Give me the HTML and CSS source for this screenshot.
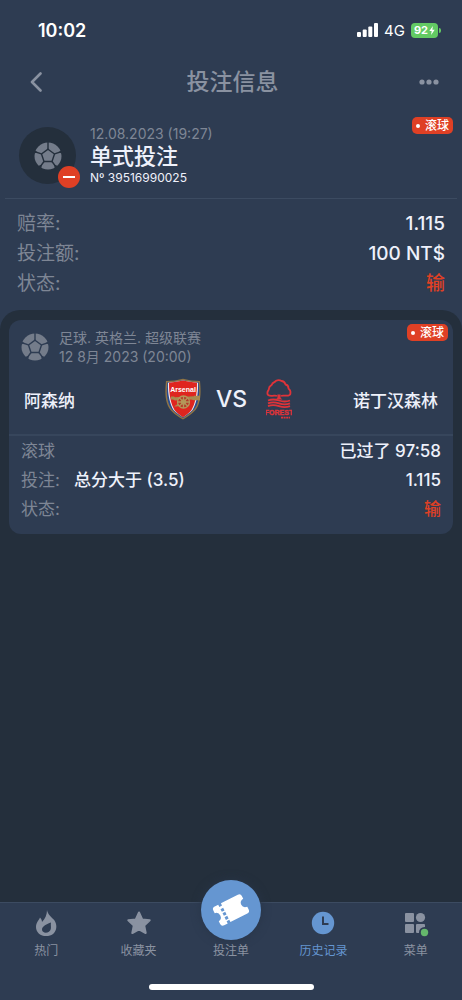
FILE: index.html
```html
<!DOCTYPE html>
<html lang="zh-CN">

<head>
    <meta charset="UTF-8">
    <meta name="viewport" content="width=device-width, initial-scale=1.0">
    <title>投注信息</title>
    <link rel="stylesheet" href="styles.css">
</head>

<body>
    <!-- shared football icon -->
    <svg class="sprite" aria-hidden="true">
        <symbol id="icon-ball" viewBox="0 0 28 28">
            <circle cx="14" cy="14" r="13.5" fill="currentColor" />
            <g class="seam">
                <path d="M14 7.2 20.5 11.900 18 19.500H10L7.500 11.900Z" />
                <path d="M14 7.200V0M20.500 11.900 28 9.500M18 19.500 22.500 25.700M10 19.500 5.500 25.700M7.500 11.900 0 9.500" />
                <path d="M26 10 28 8.500V11ZM2 10 0 8.500V11ZM21 23.700 23.500 24.500 21.500 26.500ZM7 23.700 4.500 24.500 6.500 26.500Z" />
            </g>
        </symbol>
    </svg>

    <div class="status-bar">
        <span class="time">10:02</span>
        <div class="status-right">
            <svg class="signal" viewBox="0 0 21 14" aria-hidden="true">
                <rect x="0" y="9" width="4" height="5" rx="1" />
                <rect x="5.700" y="6.500" width="4" height="7.500" rx="1" />
                <rect x="11.300" y="3.500" width="4" height="10.500" rx="1" />
                <rect x="17" y="0" width="4" height="14" rx="1" />
            </svg>
            <span class="network">4G</span>
            <span class="battery">92<svg viewBox="0 0 6 10" aria-hidden="true"><path d="M4 0 0 5.600H2.600L2 10 6 4.300H3.400Z" /></svg></span>
        </div>
    </div>

    <header class="header">
        <button class="icon-btn" aria-label="返回">
            <svg width="12" height="20" viewBox="0 0 12 20"><path class="back-line" d="M10.500 1.500 2 10 10.500 18.500" /></svg>
        </button>
        <h1>投注信息</h1>
        <button class="icon-btn" aria-label="更多">
            <svg width="20" height="6" viewBox="0 0 20 6" fill="currentColor">
                <circle cx="3" cy="3" r="2.600" />
                <circle cx="10" cy="3" r="2.600" />
                <circle cx="17" cy="3" r="2.600" />
            </svg>
        </button>
    </header>

    <section class="summary">
        <span class="live">滚球</span>
        <div class="bet-head">
            <div class="bet-icon">
                <svg class="ball"><use href="#icon-ball" /></svg>
                <span class="minus"></span>
            </div>
            <div class="bet-text">
                <p class="bet-date">12.08.2023 (19:27)</p>
                <h2>单式投注</h2>
                <p class="bet-number">Nº 39516990025</p>
            </div>
        </div>
        <dl class="rows">
            <div><dt>赔率:</dt><dd>1.115</dd></div>
            <div><dt>投注额:</dt><dd>100 NT$</dd></div>
            <div><dt>状态:</dt><dd class="lost">输</dd></div>
        </dl>
    </section>

    <main class="content">
        <article class="card">
            <span class="live">滚球</span>
            <div class="league">
                <svg class="ball"><use href="#icon-ball" /></svg>
                <div>
                    <p>足球. 英格兰. 超级联赛</p>
                    <p>12 8月 2023 (20:00)</p>
                </div>
            </div>
            <div class="teams">
                <span class="team">阿森纳</span>
                <svg class="arsenal" viewBox="0 0 36 42" role="img" aria-label="Arsenal">
                    <path d="M1 3Q10 3 18 .8 26 3 35 3C36 13 36 21 33 28 30 34 24 38 18 41.500 12 38 6 34 3 28 0 21 0 13 1 3Z" fill="#8f7445" />
                    <path d="M2.300 4.300Q11 4 18 2.200 25 4 33.700 4.300C34.600 14 34.300 21 31.700 27.300 29 33 23.500 36.500 18 40 12.500 36.500 7 33 4.300 27.300 1.700 21 1.400 14 2.300 4.300Z" fill="#294b91" />
                    <path d="M3 4.700Q11 4.200 18 2.600 25 4.200 33 4.700C33.500 17 31 26 27.500 32 24.500 35 21 37.500 18 39.300 15 37.500 11.500 35 8.500 32 5 26 2.500 17 3 4.700Z" fill="#eee9ed" />
                    <path d="M4 4.800Q12 4 18 2.600 24 4 32 4.800C32 17 30 26 26.500 32 24 35 21 37.500 18 39.300 15 37.500 12 35 9.500 32 6 26 4 17 4 4.800Z" fill="#df251f" />
                    <text x="18" y="13.500" text-anchor="middle">Arsenal</text>
                    <path d="M6 18.500H9L10 19.300 29 18.300V17.800H35V22.300H29L26 21.500 10 22.500 8 21.500H6Z" fill="#a78a4f" />
                    <path d="M9 28.500 17 23 20 24.500 12 28.500Z" fill="#a78a4f" />
                    <g fill="none" stroke="#b49659" stroke-width="1.300">
                        <circle cx="18.500" cy="24" r="6" fill="#b33a29" />
                        <path d="M12.500 24H24.500M18.500 18V30M14.300 19.800 22.700 28.200M22.700 19.800 14.300 28.200" />
                        <circle cx="18.500" cy="24" r="2" fill="#b49659" />
                    </g>
                </svg>
                <span class="versus">VS</span>
                <svg class="forest" viewBox="0 0 26 40" role="img" aria-label="Forest">
                    <g fill="none" stroke="#df3339" stroke-width="1.800" stroke-linejoin="round">
                        <path d="M11 17C9 16 8 17 6 16.800 3 17 1 16 1.500 14 1 12 3 11.500 3 9.500 3 7 5 7 6 5.500 6 3.500 9 3.500 10 1.800 12 .8 14 1 15.500 2 18 2 19 4 19.500 5.500 22 6 22.500 8 22.500 9.500 24 11 25 12.500 24.300 14 25 16 22 17 20 16.500 18 17 17 16 15 17" />
                        <path d="M2 21.500Q7 19.500 13 21.500T24 21.500M2 24.300Q7 22.300 13 24.300T24 24.300M2 27.100Q7 25.100 13 27.100T24 27.100" />
                    </g>
                    <path d="M11.400 15.500H14.600V19L16.500 20.500H9.500L11.400 19Z" fill="#df3339" />
                    <text x="13" y="36" text-anchor="middle">FOREST</text>
                    <path d="M15 38.600H24" stroke="#df3339" stroke-width="1.700" stroke-dasharray="2 .6" />
                </svg>
                <span class="team away">诺丁汉森林</span>
            </div>
            <dl class="rows small">
                <div><dt>滚球</dt><dd>已过了 97:58</dd></div>
                <div><dt>投注:</dt><dd class="pick">总分大于 (3.5)</dd><dd>1.115</dd></div>
                <div><dt>状态:</dt><dd class="lost">输</dd></div>
            </dl>
        </article>
    </main>

    <nav class="tabs">
        <a href="#hot">
            <svg viewBox="0 0 28 28"><path d="M15 1C15.500 5.500 20 8.500 22.500 11.500 26 16.500 24.500 25 18 26.500 11 28.500 4 25 4 18 4 13.500 7 11 8 8.500 9.500 10 10 11.500 10 13 13 10 15 6 15 1Z" fill="currentColor" /><path class="cut" d="M19 13.500C15 15 10 17 10 20.500 10 25 18 24.500 18.800 20 19.300 17.500 18.500 16 19 13.500Z" /></svg>
            <span>热门</span>
        </a>
        <a href="#favorites">
            <svg viewBox="0 0 28 28"><path d="m14 3.500 3.200 6.900 7.500.9-5.500 5.200 1.500 7.500L14 20.300 7.300 24l1.500-7.500-5.500-5.200 7.500-.9Z" fill="currentColor" stroke="currentColor" stroke-width="2" stroke-linejoin="round" /></svg>
            <span>收藏夹</span>
        </a>
        <a href="#slip" class="slip">
            <i class="slip-circle">
                <svg viewBox="0 0 60 60"><g transform="rotate(-27 30 30)"><path d="M16 19.500H21V22H24V19.500H43Q46 19.500 46 22.500V25.500Q41.500 26 41.500 30T46 34.500V37.500Q46 40.500 43 40.500H24V38H21V40.500H17Q14 40.500 14 37.500V34.500Q18 34 18 30T14 25.500V22.500Q14 19.500 17 19.500Z" fill="#fff" /><path d="M22.500 24.500V27.500M22.500 29V32M22.500 33.500V36.500" stroke="#6596d1" stroke-width="3" /></g></svg>
            </i>
            <span>投注单</span>
        </a>
        <a href="#history" class="active">
            <svg viewBox="0 0 28 28"><circle cx="14" cy="14" r="11.200" fill="currentColor" /><path class="clock-hand" d="M14 7.500V15H19.500" /></svg>
            <span>历史记录</span>
        </a>
        <a href="#menu">
            <svg viewBox="0 0 28 28"><g fill="currentColor"><rect x="3" y="4" width="9" height="9" rx="1" /><circle cx="18.500" cy="8.500" r="4.600" /><rect x="3" y="15" width="9" height="9" rx="1" /><rect x="14" y="15" width="9" height="9" rx="1" /></g><circle class="cut" cx="22.500" cy="23.500" r="5.500" /><circle cx="22.500" cy="23.500" r="3.700" fill="#65b76c" /></svg>
            <span>菜单</span>
        </a>
    </nav>
</body>

</html>
```
FILE: styles.css
```css
* {
    box-sizing: border-box;
    padding: 0;
    margin: 0;
}

body {
    display: flex;
    flex-direction: column;
    min-height: 100vh;
    background-color: #2e3c52;
    color: #eef1fb;
    font-family: Inter, "Noto Sans CJK SC", sans-serif;
}

.sprite {
    position: absolute;
    width: 0;
    height: 0;
}

.seam {
    fill: none;
    stroke: var(--seam, #2e3c52);
    stroke-width: 1.4;
}

/* status bar */
.status-bar {
    display: flex;
    justify-content: space-between;
    align-items: center;
    height: 60px;
    padding: 0 22px 0 38px;
    color: #fff;
}

.time {
    font-size: 18px;
    font-weight: 600;
}

.status-right {
    display: flex;
    align-items: center;
    gap: 6px;
}

.signal {
    width: 21px;
    height: 14px;
    fill: #fff;
}

.network {
    font-size: 15px;
}

.battery {
    position: relative;
    display: flex;
    align-items: center;
    justify-content: center;
    gap: 1px;
    width: 27px;
    height: 15px;
    margin-right: 2px;
    border-radius: 4px;
    background-color: #63ca63;
    font-size: 11px;
    font-weight: 700;
}

.battery svg {
    width: 6px;
    height: 9px;
    fill: #fff;
}

.battery::after {
    content: "";
    position: absolute;
    right: -3px;
    top: 5px;
    width: 2px;
    height: 5px;
    border-radius: 0 2px 2px 0;
    background-color: #63ca63;
}

/* header */
.header {
    display: flex;
    justify-content: space-between;
    align-items: center;
    height: 44px;
    padding: 0 13px 0 16px;
    color: #8a92a1;
}

.header h1 {
    font-size: 23px;
    line-height: 44px;
    font-weight: 500;
}

.icon-btn {
    display: flex;
    align-items: center;
    justify-content: center;
    width: 40px;
    height: 40px;
    border: none;
    background: none;
    color: inherit;
}

.back-line {
    fill: none;
    stroke: currentColor;
    stroke-width: 2.6;
    stroke-linecap: round;
    stroke-linejoin: round;
}

/* live badge */
.live {
    position: absolute;
    top: 13px;
    right: 9px;
    display: flex;
    align-items: center;
    gap: 5px;
    height: 17px;
    padding: 0 4px;
    border-radius: 5px;
    background-color: #df4025;
    color: #fff;
    font-size: 12px;
    font-weight: 500;
    line-height: 17px;
}

.live::before {
    content: "";
    width: 4px;
    height: 4px;
    border-radius: 50%;
    background-color: #fff;
}

/* bet summary */
.summary {
    position: relative;
    padding: 0 5px 11px;
}

.bet-head {
    display: flex;
    gap: 14px;
    padding: 20px 14px 10px;
    border-bottom: 1px solid #3c4b61;
}

.bet-icon {
    --seam: #242f3c;
    position: relative;
    display: flex;
    align-items: center;
    justify-content: center;
    width: 57px;
    height: 57px;
    margin-top: 3px;
    border-radius: 50%;
    background-color: #242f3c;
}

.ball {
    width: 28px;
    height: 28px;
    color: #747c8a;
}

.minus {
    position: absolute;
    right: -4px;
    bottom: -4px;
    display: flex;
    align-items: center;
    justify-content: center;
    width: 22px;
    height: 22px;
    border-radius: 50%;
    background-color: #df4025;
}

.minus::before {
    content: "";
    width: 12px;
    height: 2px;
    background-color: #fff;
}

.bet-date {
    color: #7e8695;
    font-size: 14px;
    line-height: 20px;
}

.bet-text h2 {
    font-size: 22px;
    line-height: 24px;
    font-weight: 500;
}

.bet-number {
    font-size: 12px;
    line-height: 20px;
}

.rows {
    padding: 10px 12px 0;
    font-size: 19px;
    line-height: 30px;
}

.rows div {
    display: flex;
    justify-content: space-between;
}

.rows dt {
    color: #7e8695;
}

.rows dd {
    font-weight: 500;
}

.rows .lost {
    color: #df4025;
}

/* match list */
.content {
    flex: 1;
    padding: 10px 9px;
    border-radius: 20px 20px 0 0;
    background-color: #242f3c;
}

.card {
    position: relative;
    padding-bottom: 10px;
    border-radius: 12px;
    background-color: #2e3c52;
}

.card .live {
    top: 4px;
    right: 5px;
}

.league {
    display: flex;
    align-items: center;
    gap: 10px;
    padding: 8px 12px 0;
    color: #7e8695;
    font-size: 14px;
    line-height: 19px;
}

.teams {
    display: grid;
    grid-template-columns: 1fr 36px 30px 36px 1fr;
    align-items: center;
    column-gap: 15px;
    height: 70px;
    padding: 0 15px 2px;
    border-bottom: 2px solid #37465c;
    font-size: 17px;
    font-weight: 500;
}

.away {
    text-align: right;
    white-space: nowrap;
}

.versus {
    font-size: 23px;
    text-align: center;
}

.arsenal {
    width: 36px;
    height: 42px;
}

.arsenal text {
    fill: #fff;
    font: bold 7px "Liberation Sans", sans-serif;
}

.forest {
    width: 26px;
    height: 40px;
    margin: 0 auto;
}

.forest text {
    fill: #df3339;
    stroke: #df3339;
    stroke-width: 0.4;
    font: bold 8px "Liberation Sans Narrow", "Liberation Sans", sans-serif;
    font-size: 7px;
}

.rows.small {
    padding: 1px 12px 0;
    font-size: 17px;
    line-height: 29px;
}

.rows .pick {
    flex: 1;
    padding-left: 14px;
}

/* bottom tabs */
.tabs {
    position: relative;
    display: grid;
    grid-template-columns: repeat(5, 1fr);
    height: 98px;
    border-top: 1px solid #3c4b61;
}

.tabs a {
    display: flex;
    flex-direction: column;
    align-items: center;
    padding-top: 6px;
    color: #8a92a1;
    font-size: 12px;
    line-height: 28px;
    text-decoration: none;
}

.tabs a > svg {
    width: 28px;
    height: 28px;
}

.tabs .active {
    color: #6596d1;
}

.cut {
    fill: #2e3c52;
}

.clock-hand {
    fill: none;
    stroke: #2e3c52;
    stroke-width: 2;
}

.slip-circle {
    width: 60px;
    height: 60px;
    margin-top: -29px;
    margin-bottom: -3px;
    border-radius: 50%;
    background-color: #6596d1;
    box-shadow: 0 0 10px #283548;
}

/* home indicator */
.tabs::after {
    content: "";
    position: absolute;
    left: 50%;
    bottom: 10px;
    width: 165px;
    height: 6px;
    margin-left: -82px;
    border-radius: 3px;
    background-color: #fff;
}
```
